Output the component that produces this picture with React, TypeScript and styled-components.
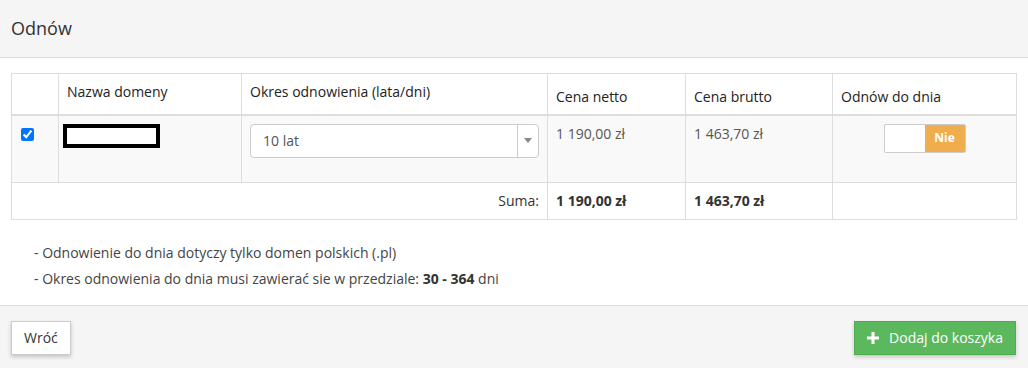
import styled, { createGlobalStyle } from "styled-components";

const GlobalStyle = createGlobalStyle`
  html, body {
    margin: 0;
    padding: 0;
    background: #fff;
    font-family: "Open Sans", "Liberation Sans", sans-serif;
    color: #333;
  }
`;

const columns = [47, 183, 306, 138, 147, 184];

const rows = [
  { period: "10 lat", netto: "1 190,00 zł", brutto: "1 463,70 zł" }
];

function App() {
  return (
    <>
      <GlobalStyle />
      <Panel>
        <PanelHeader>Odnów</PanelHeader>
        <PanelBody>
          <Table>
            <colgroup>
              {columns.map((w, i) => (
                <col key={i} style={{ width: w }} />
              ))}
            </colgroup>
            <thead>
              <tr>
                <Th $top></Th>
                <Th $top>Nazwa domeny</Th>
                <Th $top>Okres odnowienia (lata/dni)</Th>
                <Th>Cena netto</Th>
                <Th>Cena brutto</Th>
                <Th>Odnów do dnia</Th>
              </tr>
            </thead>
            <tbody>
              {rows.map((row, i) => (
                <BodyRow key={i}>
                  <Td>
                    <Check type="checkbox" defaultChecked />
                  </Td>
                  <Td>
                    <Redacted />
                  </Td>
                  <Td>
                    <Select>
                      <span>{row.period}</span>
                      <Arrow>
                        <svg width="8" height="5" viewBox="0 0 8 5">
                          <path d="M0 0h8L4 5z" fill="#888" />
                        </svg>
                      </Arrow>
                    </Select>
                  </Td>
                  <Td>{row.netto}</Td>
                  <Td>{row.brutto}</Td>
                  <Td $center>
                    <Switch>
                      <SwitchOn />
                      <SwitchOff>Nie</SwitchOff>
                    </Switch>
                  </Td>
                </BodyRow>
              ))}
              <tr>
                <Td colSpan={3} $right>Suma:</Td>
                <Td $bold>1 190,00 zł</Td>
                <Td $bold>1 463,70 zł</Td>
                <Td></Td>
              </tr>
            </tbody>
          </Table>
          <Notes>
            <li>- Odnowienie do dnia dotyczy tylko domen polskich (.pl)</li>
            <li>
              - Okres odnowienia do dnia musi zawierać sie w przedziale: <b>30 - 364</b> dni
            </li>
          </Notes>
        </PanelBody>
        <PanelFooter>
          <Button>Wróć</Button>
          <Button $variant="success">
            <PlusIcon viewBox="0 0 12 12">
              <path d="M4.5 0h3v4.5H12v3H7.5V12h-3V7.5H0v-3h4.5z" fill="#fff" />
            </PlusIcon>
            Dodaj do koszyka
          </Button>
        </PanelFooter>
      </Panel>
    </>
  );
}

const Panel = styled.div`
  display: flex;
  flex-direction: column;
  min-height: 368px;
`;

const PanelHeader = styled.div`
  background: #f5f5f5;
  border-bottom: 1px solid #ddd;
  padding: 16px 11px 17px;
  font-size: 18px;
  line-height: 24px;
  color: #333;
`;

const PanelBody = styled.div`
  padding: 15px 12px 13px 11px;
`;

const Table = styled.table`
  width: 1005px;
  table-layout: fixed;
  border-collapse: collapse;
  font-size: 14px;
  line-height: 20px;
  border: 1px solid #ddd;
`;

const Th = styled.th<{ $top?: boolean }>`
  height: 41px;
  box-sizing: border-box;
  border: 1px solid #ddd;
  border-bottom: 2px solid #ddd;
  padding: ${({ $top }) => ($top ? "8px 8px 6px" : "8px 8px 7px")};
  vertical-align: ${({ $top }) => ($top ? "top" : "bottom")};
  text-align: left;
  font-weight: 400;
  color: #222;
`;

const BodyRow = styled.tr`
  background: #f9f9f9;
`;

const Td = styled.td<{ $right?: boolean; $bold?: boolean; $center?: boolean }>`
  border: 1px solid #ddd;
  padding: 8px;
  vertical-align: top;
  color: ${({ $bold, $right }) => ($bold || $right ? "#333" : "#555")};
  font-weight: ${({ $bold }) => ($bold ? 700 : 400)};
  text-align: ${({ $right, $center }) => ($right ? "right" : $center ? "center" : "left")};
`;

const Check = styled.input`
  width: 13px;
  height: 13px;
  margin: 4px 0 0 1px;
`;

const Redacted = styled.div`
  width: 89px;
  height: 16px;
  margin: 0 0 0 -4px;
  border: 4px solid #000;
  background: #fff;
`;

const Select = styled.div`
  display: flex;
  align-items: center;
  height: 34px;
  box-sizing: border-box;
  border: 1px solid #ccc;
  border-radius: 4px;
  background: #fff;
  margin-bottom: 16px;
  padding-left: 12px;
  font-size: 14px;
  color: #555;

  span {
    flex: 1;
  }
`;

const Arrow = styled.div`
  width: 20px;
  align-self: stretch;
  border-left: 1px solid #ccc;
  display: flex;
  align-items: center;
  justify-content: center;
`;

const Switch = styled.div`
  display: inline-flex;
  vertical-align: top;
  width: 82px;
  height: 29px;
  box-sizing: border-box;
  border: 1px solid #ccc;
  border-radius: 2px;
  background: #fff;
  overflow: hidden;
`;

const SwitchOn = styled.span`
  flex: 1;
`;

const SwitchOff = styled.span`
  width: 40px;
  background: #f0ad4e;
  color: #fff;
  font-size: 12px;
  font-weight: 700;
  display: flex;
  align-items: center;
  justify-content: center;
`;

const Notes = styled.ul`
  list-style: none;
  margin: 20px 0 0;
  padding: 0 0 0 23px;
  font-size: 14px;
  line-height: 26px;
  color: #444;

  b {
    color: #333;
  }
`;

const PanelFooter = styled.div`
  flex: 1;
  background: #f5f5f5;
  border-top: 1px solid #ddd;
  padding: 15px 12px 13px 11px;
  display: flex;
  justify-content: space-between;
  align-items: flex-start;
`;

const Button = styled.button<{ $variant?: "success" }>`
  display: inline-flex;
  align-items: center;
  gap: 10px;
  height: 34px;
  padding: 0 12px;
  font-family: "Open Sans", "Liberation Sans", sans-serif;
  font-size: 14px;
  border-radius: 0;
  cursor: pointer;
  box-shadow: 0 2px 4px rgba(0, 0, 0, 0.2);
  border: 1px solid ${({ $variant }) => ($variant === "success" ? "#4cae4c" : "#ccc")};
  background: ${({ $variant }) => ($variant === "success" ? "#5cb85c" : "#fff")};
  color: ${({ $variant }) => ($variant === "success" ? "#fff" : "#333")};
`;

const PlusIcon = styled.svg`
  width: 12px;
  height: 12px;
`;

export default App;
